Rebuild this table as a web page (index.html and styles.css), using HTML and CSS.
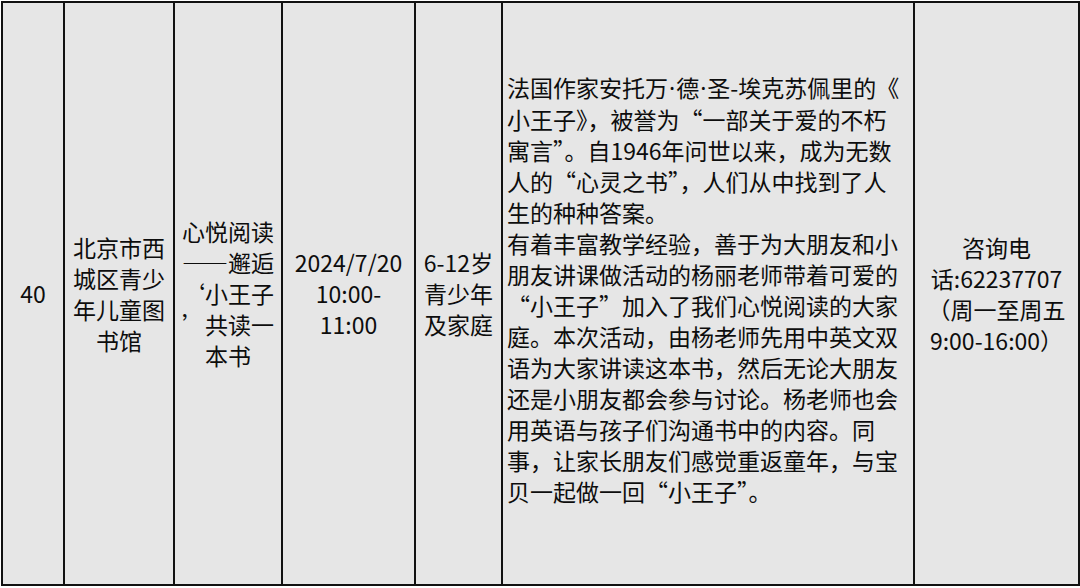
FILE: index.html
```html
<!DOCTYPE html>
<html lang="zh-CN">
<head>
<meta charset="utf-8">
<title>活动列表</title>
<link rel="stylesheet" href="styles.css">
</head>
<body>
<table class="grid">
  <colgroup>
    <col class="c-no">
    <col class="c-org">
    <col class="c-title">
    <col class="c-time">
    <col class="c-age">
    <col class="c-desc">
    <col class="c-contact">
  </colgroup>
  <tbody>
    <tr>
      <td class="center">40</td>
      <td class="center">北京市西<br>城区青少<br>年儿童图<br>书馆</td>
      <td class="center">心悦阅读<br>——邂逅<br>‘小王子<br>’共读一<br>本书</td>
      <td class="center">2024/7/20<br>10:00-<br>11:00</td>
      <td class="center">6-12岁<br>青少年<br>及家庭</td>
      <td class="desc">法国作家安托万<span class="mid">·</span>德<span class="mid">·</span>圣-埃克苏佩里的《<br>小王子》，被誉为“一部关于爱的不朽<br>寓言”。自1946年问世以来，成为无数<br>人的“心灵之书”，人们从中找到了人<br>生的种种答案。<br>有着丰富教学经验，善于为大朋友和小<br>朋友讲课做活动的杨丽老师带着可爱的<br>“小王子”加入了我们心悦阅读的大家<br>庭。本次活动，由杨老师先用中英文双<br>语为大家讲读这本书，然后无论大朋友<br>还是小朋友都会参与讨论。杨老师也会<br>用英语与孩子们沟通书中的内容。同<br>事，让家长朋友们感觉重返童年，与宝<br>贝一起做一回“小王子”。</td>
      <td class="center">咨询电<br>话:62237707<br>（周一至周五<br>9:00-16:00）</td>
    </tr>
  </tbody>
</table>
</body>
</html>
```

FILE: styles.css
```css
html, body {
  margin: 0;
  padding: 0;
  background: #ffffff;
}

.grid {
  margin: 1px 0 0 1px;
  width: 1077px;
  height: 585px;
  border-collapse: collapse;
  table-layout: fixed;
  background: #e6e6e6;
  font-family: "Noto Sans CJK SC", "Noto Sans", sans-serif;
  font-size: 23px;
  line-height: 31px;
  color: #0d0d0d;
}

.grid td {
  border: 2px solid #111111;
  padding: 0 4px;
  vertical-align: middle;
  white-space: nowrap;
  overflow: visible;
}

.c-no { width: 62px; }
.c-org { width: 110px; }
.c-title { width: 108px; }
.c-time { width: 133px; }
.c-age { width: 87px; }
.c-desc { width: 412px; }
.c-contact { width: 165px; }

.center {
  text-align: center;
}

.grid td.desc {
  text-align: left;
  padding-bottom: 8px;
}

.mid {
  font-family: "Noto Sans", sans-serif;
  padding: 0 1px;
}
```
